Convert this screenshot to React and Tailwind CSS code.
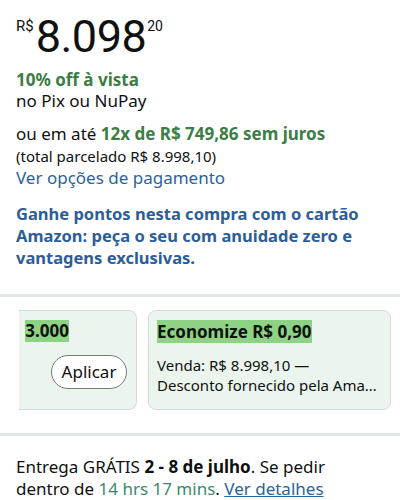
const font = { fontFamily: '"Noto Sans", "Open Sans", Arial, sans-serif' };
const priceFont = { fontFamily: 'Roboto, "Noto Sans", Arial, sans-serif' };

export default function App() {
  return (
    <div className="w-[400px] h-[500px] overflow-hidden bg-white text-[#0f1111]" style={font}>
      <div className="px-4 pt-[12px]">
        <div className="flex items-start leading-none" style={priceFont}>
          <span className="text-[15px] mt-[7px]">R$</span>
          <span className="text-[45px] leading-[50px] tracking-[-0.5px] ml-[2px]">8.098</span>
          <span className="text-[14px] mt-[7px] ml-[1px]">20</span>
        </div>
        <div className="mt-[7px] text-[17px] leading-[21px]">
          <div className="font-bold text-[#3b7d44]">10% off à vista</div>
          <div>no Pix ou NuPay</div>
        </div>
        <div className="mt-[11px] text-[17px] leading-[23px]">
          ou em até <span className="font-bold text-[#3b7d44]">12x de R$ 749,86 sem juros</span>
        </div>
        <div className="text-[15px] leading-[22px]">(total parcelado R$ 8.998,10)</div>
        <div className="text-[17px] leading-[22px] text-[#2a649a]">Ver opções de pagamento</div>
        <div className="mt-[14px] text-[16.5px] leading-[22px] font-bold text-[#2d5d98]">
          Ganhe pontos nesta compra com o cartão Amazon: peça o seu com anuidade zero e vantagens exclusivas.
        </div>
      </div>

      <div className="mt-[25px] h-[3px] bg-[#e3e6e6]" />

      <div className="ml-[19px] mt-[13px] overflow-hidden">
        <div className="flex gap-[11px] -ml-[120px]">
          <div className="w-[238px] h-[100px] shrink-0 rounded-[8px] border border-[#d5dbd7] bg-[#ebf5ee] flex flex-col items-end pr-[9px]">
            <div className="self-stretch flex justify-end">
              <span className="mt-[9px] mr-[58px] bg-[#8ed383] text-[17px] leading-[22px] font-bold">3.000</span>
            </div>
            <button className="mt-[13px] h-[34px] w-[76px] rounded-full border border-[#767b7b] bg-white text-[17px]">Aplicar</button>
          </div>
          <div className="w-[243px] h-[100px] shrink-0 rounded-[8px] border border-[#d5dbd7] bg-[#ebf5ee] px-[8px] pt-[9px]">
            <span className="bg-[#8ed383] text-[17px] leading-[22px] font-bold">Economize R$ 0,90</span>
            <div className="mt-[11px] text-[15px] leading-[20px]">
              <div>Venda: R$ 8.998,10 —</div>
              <div className="truncate">Desconto fornecido pela Amazon</div>
            </div>
          </div>
        </div>
      </div>

      <div className="mt-[23px] h-[3px] bg-[#e3e6e6]" />

      <div className="px-4 pt-[20px] text-[17px] leading-[22px]">
        Entrega GRÁTIS <span className="font-bold">2 - 8 de julho</span>. Se pedir
        <br />
        dentro de <span className="text-[#3b8a6c]">14 hrs 17 mins</span>.{' '}
        <span className="text-[#2a649a] underline">Ver detalhes</span>
      </div>
    </div>
  );
}
